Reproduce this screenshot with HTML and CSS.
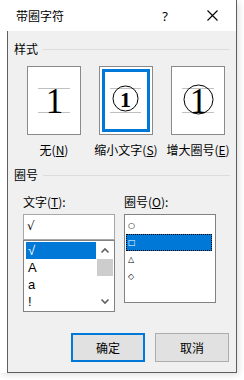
FILE: index.html
```html
<!DOCTYPE html>
<html lang="zh-CN">
<head>
<meta charset="utf-8">
<link rel="stylesheet" href="styles.css">
</head>
<body>
<div class="win">
  <div class="titlebar">
    <span class="title">带圈字符</span>
    <span class="help">?</span>
    <svg class="close" width="11" height="11" viewBox="0 0 11 11"><path d="M0.5 0.5L10.5 10.5M10.5 0.5L0.5 10.5" stroke="#000" stroke-width="1.1" fill="none"/></svg>
  </div>
  <div class="body">
    <div class="group-h"><span>样式</span><i class="rule"></i></div>
    <div class="styles">
      <div class="opt">
        <div class="pv">
          <svg width="52" height="67" viewBox="0 0 52 67">
            <line x1="10" y1="21.5" x2="42" y2="21.5" stroke="#c0c0c0"/>
            <line x1="10" y1="45.5" x2="42" y2="45.5" stroke="#c0c0c0"/>
            <text x="26.5" y="45.5" text-anchor="middle" class="big1">1</text>
          </svg>
        </div>
        <div class="cap">无(<u>N</u>)</div>
      </div>
      <div class="opt">
        <div class="pv sel">
          <svg width="52" height="67" viewBox="0 0 52 67">
            <line x1="10" y1="21.5" x2="41" y2="21.5" stroke="#c0c0c0"/>
            <line x1="10" y1="45.5" x2="41" y2="45.5" stroke="#c0c0c0"/>
            <circle cx="25.5" cy="31.5" r="12.5" fill="none" stroke="#000" stroke-width="1"/>
            <text x="25.5" y="40" text-anchor="middle" class="small1">1</text>
          </svg>
        </div>
        <div class="cap">缩小文字(<u>S</u>)</div>
      </div>
      <div class="opt">
        <div class="pv">
          <svg width="52" height="67" viewBox="0 0 52 67">
            <line x1="10" y1="21.5" x2="42" y2="21.5" stroke="#c0c0c0"/>
            <line x1="10" y1="45.5" x2="42" y2="45.5" stroke="#c0c0c0"/>
            <circle cx="26.5" cy="32.5" r="14.5" fill="none" stroke="#000" stroke-width="1"/>
            <text x="26.5" y="45.5" text-anchor="middle" class="big1">1</text>
          </svg>
        </div>
        <div class="cap">增大圈号(<u>E</u>)</div>
      </div>
    </div>
    <div class="group-h g2"><span>圈号</span><i class="rule"></i></div>
    <div class="cols">
      <div class="col">
        <div class="lbl">文字(<u>T</u>):</div>
        <div class="input">√</div>
        <div class="list">
          <div class="items">
            <div class="item on">√</div>
            <div class="item">A</div>
            <div class="item">a</div>
            <div class="item">!</div>
          </div>
          <div class="sbar">
            <svg width="16" height="17" viewBox="0 0 16 17"><path d="M4.5 10.5L8 7L11.5 10.5" stroke="#606060" stroke-width="1.6" fill="none"/></svg>
            <div class="thumb"></div>
            <div class="track"></div>
            <svg width="16" height="17" viewBox="0 0 16 17"><path d="M4.5 6.5L8 10L11.5 6.5" stroke="#606060" stroke-width="1.6" fill="none"/></svg>
          </div>
        </div>
      </div>
      <div class="col">
        <div class="lbl">圈号(<u>O</u>):</div>
        <div class="list2">
          <div class="item2">○</div>
          <div class="item2 on">□</div>
          <div class="item2">△</div>
          <div class="item2">◇</div>
        </div>
      </div>
    </div>
    <div class="btns">
      <button class="btn primary">确定</button>
      <button class="btn">取消</button>
    </div>
  </div>
</div>
</body>
</html>
```
FILE: styles.css
```css
* { box-sizing: border-box; }
html, body { margin: 0; padding: 0; }
body {
  background: #fff;
  width: 244px;
  height: 380px;
  overflow: hidden;
  font-family: "Noto Sans CJK SC", "Noto Sans", sans-serif;
  font-size: 12px;
  color: #000;
}
.win {
  width: 237px;
  border-right: 1px solid #5f5f5f;
  box-shadow: 2px 2px 6px rgba(0,0,0,0.12);
}
.titlebar {
  height: 31px;
  background: #fff;
  display: flex;
  align-items: center;
  padding-left: 16px;
}
.title { line-height: 16px; margin-top: 0px; }
.help { margin-left: auto; font-size: 13px; line-height: 16px; font-family: "Noto Sans", sans-serif; }
.close { margin-left: 39px; margin-right: 18px; }
.body {
  margin-left: 7px;
  border-left: 1px solid #5f5f5f;
  border-bottom: 1px solid #5f5f5f;
  background: #f0f0f0;
  height: 342px;
  padding: 10px 6px 0 6px;
}
.group-h {
  display: flex;
  align-items: center;
  height: 16px;
  line-height: 16px;
}
.group-h .rule {
  flex: 1;
  height: 1px;
  background: #dcdcdc;
  margin-left: 5px;
}
.g2 { margin-top: 9px; }
.styles {
  display: flex;
  gap: 18px;
  margin-top: 9px;
  padding-left: 13px;
}
.opt { width: 54px; display: flex; flex-direction: column; align-items: center; }
.pv {
  width: 54px;
  height: 69px;
  border: 1px solid #8a8a8a;
  background: #fff;
}
.pv svg { display: block; }
.pv.sel { box-shadow: inset 0 0 0 2px #fff, inset 0 0 0 5px #0078d7; }
.big1 { font-family: "Liberation Serif", serif; font-size: 35px; fill: #000; }
.small1 { font-family: "Liberation Serif", serif; font-size: 22px; font-weight: 600; fill: #000; }
.cap { margin-top: 7px; line-height: 16px; white-space: nowrap; }
u { text-decoration: underline; text-underline-offset: 1px; }
.cols {
  display: grid;
  grid-template-columns: 92px 92px;
  column-gap: 9px;
  margin-top: 11px;
  padding-left: 9px;
  align-items: start;
}
.lbl { line-height: 16px; }
.input {
  margin-top: 4px;
  height: 26px;
  border: 1px solid #a8a8a8;
  background: #fff;
  font-family: "DejaVu Sans", sans-serif;
  font-size: 12px;
  line-height: 22px;
  padding-left: 3px;
}
.list {
  height: 72px;
  border: 1px solid #828282;
  background: #fff;
  display: flex;
  padding: 1px;
}
.items { width: 72px; }
.item {
  height: 17px;
  line-height: 17px;
  padding-left: 2px;
  margin-left: 1px;
  font-family: "Liberation Sans", sans-serif;
  font-size: 13px;
}
.item.on { background: #0078d7; color: #fff; }
.sbar {
  width: 16px;
  margin-left: 1px;
  display: flex;
  flex-direction: column;
}
.sbar svg { display: block; }
.thumb { height: 17px; background: #cdcdcd; }
.track { flex: 1; }
.list2 {
  margin-top: 4px;
  height: 89px;
  border: 1px solid #828282;
  background: #fff;
  padding: 2px 1px;
}
.item2 {
  height: 17px;
  line-height: 17px;
  padding-left: 2px;
  font-family: "DejaVu Sans", sans-serif;
  font-size: 8px;
  font-weight: bold;
}
.item2.on { background: #0078d7; color: #fff; outline: 1px dotted #000; outline-offset: -1px; margin-right: 2px; }
.btns {
  display: flex;
  justify-content: flex-end;
  gap: 10px;
  margin-top: 21px;
  padding-right: 1px;
}
.btn {
  width: 74px;
  height: 29px;
  background: #e1e1e1;
  border: 1px solid #adadad;
  font-family: "Noto Sans CJK SC", sans-serif;
  font-size: 12px;
  color: #000;
  padding: 0;
  margin: 0;
}
.btn.primary { border: 2px solid #0078d7; }
```
